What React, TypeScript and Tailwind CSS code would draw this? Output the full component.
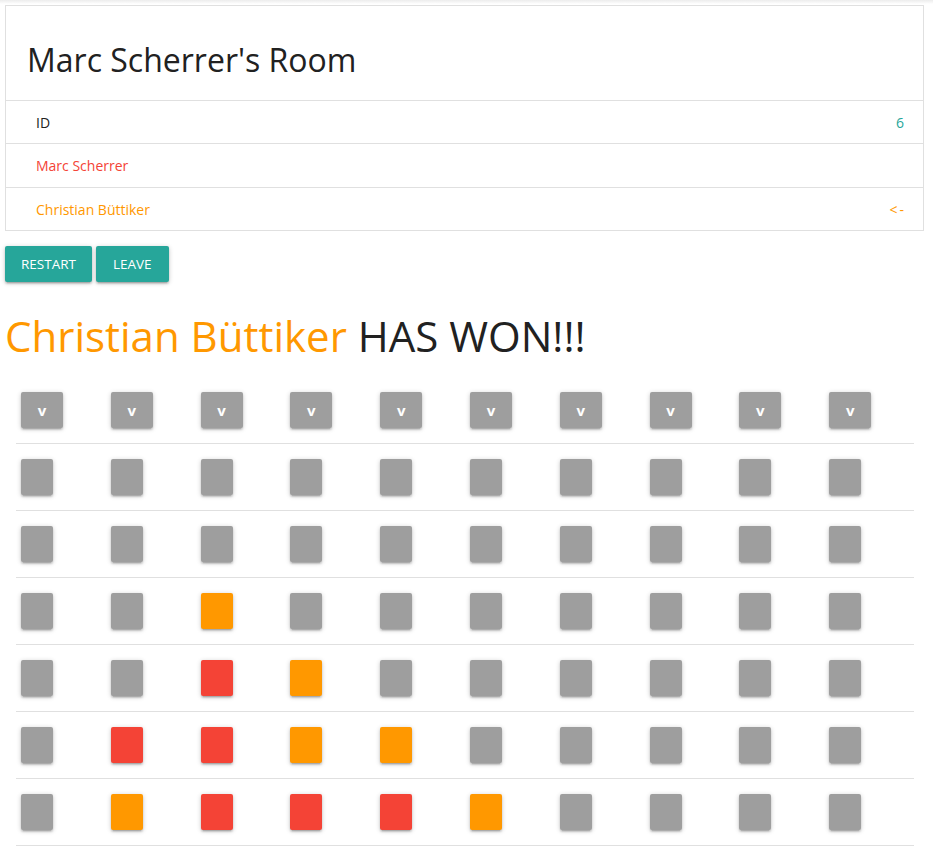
import React from "react";

type Cell = "g" | "r" | "o";

const board: Cell[][] = [
  ["g", "g", "g", "g", "g", "g", "g", "g", "g", "g"],
  ["g", "g", "g", "g", "g", "g", "g", "g", "g", "g"],
  ["g", "g", "o", "g", "g", "g", "g", "g", "g", "g"],
  ["g", "g", "r", "o", "g", "g", "g", "g", "g", "g"],
  ["g", "r", "r", "o", "o", "g", "g", "g", "g", "g"],
  ["g", "o", "r", "r", "r", "o", "g", "g", "g", "g"],
];

const cellColor: Record<Cell, string> = {
  g: "bg-[#9e9e9e]",
  r: "bg-[#f44336]",
  o: "bg-[#ff9800]",
};

function Square({ cell }: { cell: Cell }) {
  return (
    <div
      className={`w-[32px] h-[36px] rounded-[2px] shadow-[0_2px_2px_0_rgba(0,0,0,0.14),0_3px_1px_-2px_rgba(0,0,0,0.12),0_1px_5px_0_rgba(0,0,0,0.2)] ${cellColor[cell]}`}
    />
  );
}

export default function App() {
  const cols = Array.from({ length: 10 }, (_, i) => i);

  return (
    <div className="min-h-[855px] bg-white text-[#212121] font-['Open_Sans',sans-serif]">
      <div className="h-[4px] bg-gradient-to-b from-[#ececec] to-white" />
      <div className="pl-[5px] pr-[9px] pt-[1px]">
        {/* ROOM CARD */}
        <div className="border border-[#e0e0e0]">
          <div className="h-[94px] flex items-center pl-[21px] pt-[13px]">
            <h4 className="text-[32px] leading-none text-[#212121]">Marc Scherrer's Room</h4>
          </div>
          <div className="h-[43px] border-t border-[#e0e0e0] flex items-center justify-between pl-[30px] pr-[19px] text-[14px]">
            <span className="text-[#212121]">ID</span>
            <span className="text-[#26a69a]">6</span>
          </div>
          <div className="h-[44px] border-t border-[#e0e0e0] flex items-center pl-[30px] pr-[19px] text-[14px]">
            <span className="text-[#f44336]">Marc Scherrer</span>
          </div>
          <div className="h-[43px] border-t border-[#e0e0e0] flex items-center justify-between pl-[30px] pr-[19px] text-[14px]">
            <span className="text-[#ff9800]">Christian Büttiker</span>
            <span className="text-[#ff9800] tracking-[2px] -mr-[2px]">&lt;-</span>
          </div>
        </div>

        {/* ACTIONS */}
        <div className="flex gap-[4px] mt-[15px]">
          <button className="h-[36px] px-[16px] rounded-[2px] bg-[#26a69a] text-white text-[13.5px] uppercase shadow-[0_2px_2px_0_rgba(0,0,0,0.14),0_3px_1px_-2px_rgba(0,0,0,0.12),0_1px_5px_0_rgba(0,0,0,0.2)]">
            Restart
          </button>
          <button className="h-[36px] px-[17px] rounded-[2px] bg-[#26a69a] text-white text-[13.5px] uppercase shadow-[0_2px_2px_0_rgba(0,0,0,0.14),0_3px_1px_-2px_rgba(0,0,0,0.12),0_1px_5px_0_rgba(0,0,0,0.2)]">
            Leave
          </button>
        </div>

        {/* WINNER */}
        <h3 className="mt-[28px] h-[67px] text-[42px] leading-[52px] whitespace-nowrap">
          <span className="text-[#ff9800]">Christian Büttiker</span>{" "}
          <span className="text-[#212121]">HAS WON!!!</span>
        </h3>

        {/* BOARD */}
        <div className="pl-[11px] pr-[10px]">
          <div className="grid grid-cols-10 border-b border-[#e0e0e0]">
            {cols.map((c) => (
              <div key={c} className="py-[15px] px-[5px]">
                <button className="w-[42px] h-[36px] rounded-[2px] bg-[#9e9e9e] text-white text-[15px] font-bold flex items-center justify-center shadow-[0_2px_2px_0_rgba(0,0,0,0.14),0_3px_1px_-2px_rgba(0,0,0,0.12),0_1px_5px_0_rgba(0,0,0,0.2)]">
                  v
                </button>
              </div>
            ))}
          </div>
          {board.map((row, r) => (
            <div key={r} className="grid grid-cols-10 border-b border-[#e0e0e0]">
              {row.map((cell, c) => (
                <div key={c} className="py-[15px] px-[5px]">
                  <Square cell={cell} />
                </div>
              ))}
            </div>
          ))}
        </div>
      </div>
    </div>
  );
}
